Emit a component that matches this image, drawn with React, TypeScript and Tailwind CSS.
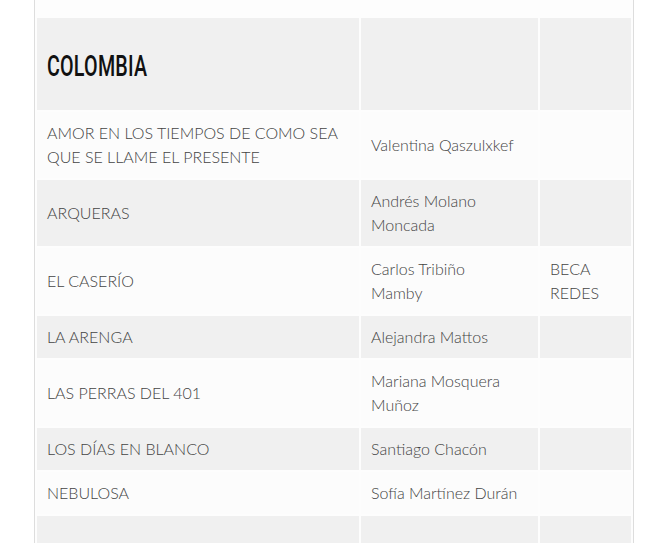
import React from 'react';

type Row = { title: React.ReactNode; author: React.ReactNode; note?: React.ReactNode; key: string };

const rows: Row[] = [
  { key: 'a', title: 'AMOR EN LOS TIEMPOS DE COMO SEA QUE SE LLAME EL PRESENTE', author: 'Valentina Qaszulxkef' },
  { key: 'b', title: 'ARQUERAS', author: 'Andrés Molano Moncada' },
  {
    key: 'c',
    title: 'EL CASERÍO',
    author: (
      <>
        Carlos Tribiño
        <br />
        Mamby
      </>
    ),
    note: 'BECA REDES',
  },
  { key: 'd', title: 'LA ARENGA', author: 'Alejandra Mattos' },
  { key: 'e', title: 'LAS PERRAS DEL 401', author: 'Mariana Mosquera Muñoz' },
  { key: 'f', title: 'LOS DÍAS EN BLANCO', author: 'Santiago Chacón' },
  { key: 'g', title: 'NEBULOSA', author: 'Sofía Martínez Durán' },
];

export default function App() {
  return (
    <div className="w-[666px] h-[543px] overflow-hidden bg-white font-['Lato',sans-serif]">
      <div className="ml-[34px] w-[600px] h-full border-x border-[#dddddd] bg-[#fdfdfd] pt-[16px]">
        <table className="table-fixed border-separate border-spacing-[2px] w-[598px] text-[16px] leading-[24px] text-[#444444] font-light">
          <colgroup>
            <col className="w-[322px]" />
            <col className="w-[177px]" />
            <col className="w-[91px]" />
          </colgroup>
          <tbody>
            <tr className="bg-[#f0f0f0]">
              <td className="h-[92px] pl-[10px] pt-[4px] align-middle">
                <span className="inline-block origin-left scale-x-[0.68] font-['Roboto',sans-serif] font-medium text-[29px] leading-[32px] text-[#111111] tracking-[0.3px]">
                  COLOMBIA
                </span>
              </td>
              <td />
              <td />
            </tr>
            {rows.map((r, i) => (
              <tr key={r.key} className={i % 2 === 1 ? 'bg-[#f0f0f0]' : 'bg-[#fcfcfc]'}>
                <td className="py-[9px] pl-[10px] pr-[10px] align-middle">{r.title}</td>
                <td className="py-[9px] pl-[10px] pr-[10px] align-middle">{r.author}</td>
                <td className="py-[9px] pl-[10px] pr-[10px] align-middle">{r.note ?? ''}</td>
              </tr>
            ))}
            <tr className="bg-[#f0f0f0]">
              <td className="h-[42px]" />
              <td />
              <td />
            </tr>
          </tbody>
        </table>
      </div>
    </div>
  );
}
